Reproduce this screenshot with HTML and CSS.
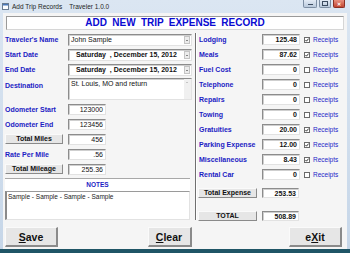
FILE: index.html
```html
<!DOCTYPE html>
<html>
<head>
<title>Add Trip Records</title>
<link rel="stylesheet" href="styles.css">
</head>
<body>
<div class="window">
  <div class="titlebar">
    <svg class="app-icon" width="7" height="7" viewBox="0 0 7 7"><rect x="0.5" y="0.5" width="6" height="6" fill="#fff" stroke="#6b7c90"/><rect x="1" y="1" width="5" height="1.5" fill="#4a78b8"/></svg>
    <span class="title">Add Trip Records &nbsp;&nbsp; Traveler 1.0.0</span>
    <div class="controls">
      <span class="ctl ctl-min"><i></i></span>
      <span class="ctl ctl-max"><i></i></span>
      <span class="ctl ctl-close">&#x2715;</span>
    </div>
  </div>

  <div class="client">
    <div class="banner">ADD NEW TRIP EXPENSE RECORD</div>

    <div class="main">
      <!-- trip details -->
      <div class="left">
        <label class="lbl">Traveler's Name</label>
        <div class="field wide">John Sample<span class="drop"></span></div>

        <label class="lbl">Start Date</label>
        <div class="field wide date">Saturday &nbsp;, December 15, 2012<span class="drop"></span></div>

        <label class="lbl">End Date</label>
        <div class="field wide date">Saturday &nbsp;, December 15, 2012<span class="drop"></span></div>

        <label class="lbl lbl-top">Destination</label>
        <div class="field wide area">St. Louis, MO and return<span class="scroll"><b></b></span></div>

        <label class="lbl">Odometer Start</label>
        <div class="field num">123000</div>

        <label class="lbl">Odometer End</label>
        <div class="field num">123456</div>

        <button class="btn">Total Miles</button>
        <div class="field num">456</div>

        <label class="lbl">Rate Per Mile</label>
        <div class="field num">.56</div>

        <button class="btn">Total Mileage</button>
        <div class="field num">255.36</div>

        <div class="notes">
          <div class="notes-head">NOTES</div>
          <div class="notes-body">Sample - Sample - Sample - Sample</div>
        </div>
      </div>

      <div class="divider"></div>

      <!-- expenses -->
      <div class="right" id="expenses"></div>
    </div>

    <div class="actions">
      <button class="btn big"><u>S</u>ave</button>
      <button class="btn big clear"><u>C</u>lear</button>
      <button class="btn big">e<u>X</u>it</button>
    </div>
  </div>
</div>
<script src="script.js"></script>
</body>
</html>
```

FILE: styles.css
```css
/* window chrome */
body {
  margin: 0;
  font-family: "Liberation Sans", Arial, sans-serif;
  background: #1f5566;
}

.window {
  width: 350px;
  height: 253px;
  box-sizing: border-box;
  background: linear-gradient(#dbe6f2, #c6d6e8);
  border-bottom: 4px solid #1f5566;
  display: flex;
  flex-direction: column;
}

.titlebar {
  height: 13px;
  display: flex;
  align-items: center;
  padding-left: 2px;
}

.app-icon {
  display: block;
}

.title {
  font-size: 6.5px;
  color: #1e1e1e;
  margin-left: 3px;
}

.controls {
  margin-left: auto;
  margin-right: 5px;
  align-self: flex-start;
  display: flex;
  gap: 2px;
}

.ctl {
  height: 8px;
  width: 12px;
  box-sizing: border-box;
  border: 1px solid #7d8ea3;
  border-top: 0;
  border-radius: 0 0 2px 2px;
  background: linear-gradient(#e3ebf5, #b9c9dc);
  display: flex;
  align-items: center;
  justify-content: center;
}

.ctl-min {
  width: 14px;
}

.ctl-min i {
  width: 5px;
  height: 1px;
  margin-top: 2px;
  background: #3b4b60;
}

.ctl-max i {
  width: 4px;
  height: 3px;
  border: 1px solid #3b4b60;
  border-top-width: 1.5px;
}

.ctl-close {
  border-color: #8a2f22;
  background: linear-gradient(#e8907f, #c24632);
  color: #fff;
  font-size: 5px;
  font-weight: bold;
}

/* form area */
.client {
  flex: 1;
  margin: 0 3px;
  background: #f5f5f5;
  display: flex;
  flex-direction: column;
}

.banner {
  margin: 3px 3px 0;
  height: 14px;
  box-sizing: border-box;
  background: #fff;
  border: 1px solid #9a9a9a;
  border-right-color: #d6d6d6;
  border-bottom-color: #d6d6d6;
  color: #0a0ad2;
  font-size: 10px;
  font-weight: bold;
  word-spacing: 2.5px;
  line-height: 12px;
  text-align: center;
}

.main {
  display: flex;
  margin-top: 4px;
  padding-left: 2px;
}

.lbl {
  color: #1c1cc4;
  font-size: 7px;
  font-weight: bold;
  align-self: start;
  margin-top: 2px;
  white-space: nowrap;
}

.lbl-top {
  margin-top: 3px;
}

.field {
  position: relative;
  box-sizing: border-box;
  background: #fff;
  border: 1px solid #e2e2e2;
  border-top-color: #8c8c8c;
  border-left-color: #8c8c8c;
  box-shadow: inset 1px 1px 0 #cfcfcf;
  font-size: 7px;
  color: #111;
  line-height: 10px;
  padding: 0 2px;
  white-space: nowrap;
  overflow: hidden;
  align-self: center;
}

.left {
  width: 187px;
  display: grid;
  grid-template-columns: 63px 124px;
  grid-template-rows: 15px 15px 15px 25px 15px 15px 15px 15px 14px auto;
}

.field.wide {
  height: 12px;
  align-self: start;
}

.field.date {
  font-weight: bold;
  padding-left: 7px;
}

.field.area {
  height: 22px;
  margin-top: -1px;
}

.field.num {
  width: 38px;
  height: 11px;
  text-align: right;
  align-self: start;
}

.drop {
  position: absolute;
  right: 1px;
  top: 1px;
  width: 6px;
  height: 8px;
  background: #ececec;
  border: 1px solid #c4c4c4;
  box-sizing: border-box;
}

.drop::after {
  content: "";
  position: absolute;
  left: 1px;
  top: 3px;
  border-left: 1.5px solid transparent;
  border-right: 1.5px solid transparent;
  border-top: 1.5px solid #222;
}

.scroll {
  position: absolute;
  right: 0;
  top: 0;
  bottom: 0;
  width: 7px;
  background: #f0f0f0;
}

.scroll b {
  position: absolute;
  left: 2px;
  top: 3px;
  border-left: 1.5px solid transparent;
  border-right: 1.5px solid transparent;
  border-bottom: 1.5px solid #9a9a9a;
}

.btn {
  font-family: "Liberation Sans", Arial, sans-serif;
  font-size: 7px;
  font-weight: bold;
  color: #111;
  background: #e6e6e6;
  border: 1px solid #fafafa;
  border-right-color: #8a8a8a;
  border-bottom-color: #8a8a8a;
  padding: 0;
  margin: 0;
  width: 58px;
  height: 10px;
  line-height: 8px;
  align-self: start;
}

.notes {
  grid-column: 1 / 3;
  width: 185px;
  display: flex;
  flex-direction: column;
}

.notes-head {
  height: 13px;
  box-sizing: border-box;
  background: #fff;
  border-top: 1px solid #a8a8a8;
  color: #1c1cc4;
  font-size: 6.5px;
  font-weight: bold;
  line-height: 11px;
  text-align: center;
}

.notes-body {
  height: 29px;
  box-sizing: border-box;
  background: #fff;
  border: 1px solid #e2e2e2;
  border-top: 1px solid #9a9a9a;
  border-left: 2px solid #8a8a8a;
  font-size: 6.5px;
  color: #222;
  padding: 1px 1px;
}

.divider {
  width: 0;
  height: 187px;
  margin: -1px 0 0 3px;
  border-left: 1px solid #6f6f6f;
  border-right: 1px solid #fff;
}

.right {
  margin-left: 2px;
  display: grid;
  grid-template-columns: 63px 38px 12px auto;
  grid-auto-rows: 15px;
  align-content: start;
}

.right .field.num {
  font-weight: bold;
}

.check {
  width: 6px;
  height: 6px;
  box-sizing: border-box;
  border: 1px solid #6a6a6a;
  background: #fff;
  margin-left: 4px;
  margin-top: 3px;
  position: relative;
}

.check svg {
  position: absolute;
  left: 0;
  top: 0;
}

.rcpt {
  color: #2424c8;
  font-size: 6.5px;
  line-height: 11px;
  margin-left: 1px;
}

.total-row {
  grid-column: 1 / 5;
  display: flex;
  gap: 5px;
  height: 10px;
}

.total-row .btn {
  width: 59px;
  margin-left: -1px;
  height: 10px;
}

.total-row .field.num {
  height: 10px;
  line-height: 9px;
  width: 37px;
}

.total-row.first {
  margin-top: 4px;
}

.total-row.grand {
  margin-top: 12px;
}

.actions {
  margin-top: auto;
  padding: 0 5px 2px 2px;
  display: flex;
  justify-content: space-between;
}

.btn.big {
  font-size: 10.5px;
  height: 20px;
  line-height: 18px;
  width: 53px;
  border-right-width: 2px;
  border-bottom-width: 2px;
}

.btn.big.clear {
  width: 44px;
  margin-right: 8px;
}
```

FILE: script.js
```js
// expense rows for the right-hand column
const expenses = [
  ["Lodging", "125.48", true],
  ["Meals", "87.62", true],
  ["Fuel Cost", "0", false],
  ["Telephone", "0", false],
  ["Repairs", "0", false],
  ["Towing", "0", false],
  ["Gratuities", "20.00", true],
  ["Parking Expense", "12.00", true],
  ["Miscellaneous", "8.43", true],
  ["Rental Car", "0", false]
];

const tick = '<svg width="4" height="4" viewBox="0 0 4 4"><path d="M0.5 2 L1.5 3.2 L3.6 0.6" fill="none" stroke="#222" stroke-width="0.9"/></svg>';

const right = document.getElementById("expenses");
let html = "";
expenses.forEach(([name, value, checked]) => {
  html += '<label class="lbl">' + name + '</label>';
  html += '<div class="field num">' + value + '</div>';
  html += '<span class="check">' + (checked ? tick : "") + '</span>';
  html += '<span class="rcpt">Receipts</span>';
});
html += '<div class="total-row first"><button class="btn">Total Expense</button><div class="field num">253.53</div></div>';
html += '<div class="total-row grand"><button class="btn">TOTAL</button><div class="field num">508.89</div></div>';
right.innerHTML = html;
```
